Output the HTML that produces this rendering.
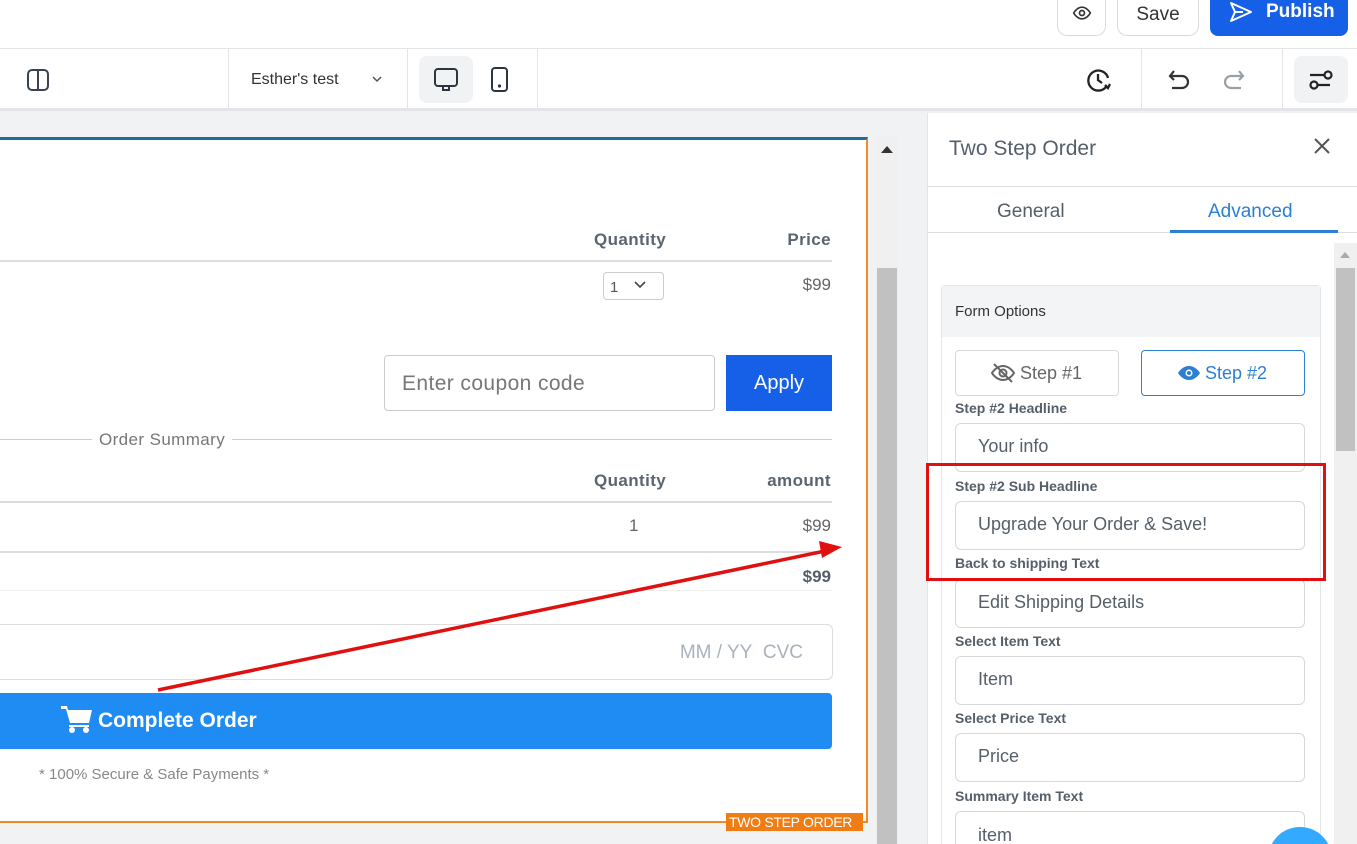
<!DOCTYPE html>
<html><head><meta charset="utf-8"><style>
*{box-sizing:border-box;margin:0;padding:0}
html{width:1357px;height:844px;overflow:hidden}
body{width:1357px;height:844px;overflow:hidden;position:relative;font-family:"Liberation Sans",sans-serif;background:#f1f2f4;color:#333}
#wrap{position:absolute;left:0;top:0;width:1357px;height:844px;overflow:hidden}
.a{position:absolute}
.lbl{position:absolute;left:955px;font-size:14px;font-weight:bold;color:#555f6a}
.inp{position:absolute;left:955px;width:350px;height:49px;border:1px solid #d6d8db;border-radius:6px;font-size:18px;color:#555f6a;padding:12px 22px;background:#fff}
.th{position:absolute;font-size:17px;font-weight:bold;color:#5a6570;letter-spacing:0.4px}
.hl{position:absolute;left:0;width:832px;height:2px;background:#ddd}
</style></head><body><div id="wrap">
<div class="a" style="left:0;top:0;width:1357px;height:49px;background:#fff;border-bottom:1px solid #e3e5e8"></div>
<div class="a" style="left:1057px;top:0;width:49px;height:36px;border:1px solid #d9dbde;border-top:none;border-radius:0 0 10px 10px;background:#fff"></div>
<svg class="a" style="left:1071px;top:3px" width="22" height="20" viewBox="0 0 24 24" fill="none" stroke="#333" stroke-width="2"><path d="M2 12s4-7 10-7 10 7 10 7-4 7-10 7S2 12 2 12z"/><circle cx="12" cy="12" r="3"/></svg>
<div class="a" style="left:1117px;top:0;width:82px;height:36px;border:1px solid #d9dbde;border-top:none;border-radius:0 0 10px 10px;background:#fff;font-size:19px;color:#333;text-align:center;padding-top:4px">Save</div>
<div class="a" style="left:1210px;top:0;width:138px;height:36px;border-radius:0 0 8px 8px;background:#1660e8;color:#fff;font-size:19px;font-weight:bold;padding:1px 0 0 56px">Publish</div>
<svg class="a" style="left:1228px;top:0px" width="26" height="24" viewBox="0 0 26 24" fill="none" stroke="#fff" stroke-width="2" stroke-linejoin="round"><path d="M3 3l20 9-20 9 4-9z M7 12h8"/></svg>
<div class="a" style="left:0;top:49px;width:1357px;height:62px;background:#fff;border-bottom:3px solid #e3e5e8"></div>
<div class="a" style="left:228px;top:49px;width:1px;height:60px;background:#e3e5e8"></div>
<div class="a" style="left:407px;top:49px;width:1px;height:60px;background:#e3e5e8"></div>
<div class="a" style="left:537px;top:49px;width:1px;height:60px;background:#e3e5e8"></div>
<div class="a" style="left:1141px;top:49px;width:1px;height:60px;background:#e3e5e8"></div>
<div class="a" style="left:1282px;top:49px;width:1px;height:60px;background:#e3e5e8"></div>
<svg class="a" style="left:26px;top:68px" width="24" height="24" viewBox="0 0 24 24" fill="none" stroke="#3a4350" stroke-width="2"><rect x="2" y="2" width="20" height="20" rx="4"/><path d="M12 2v20"/></svg>
<div class="a" style="left:251px;top:71px;font-size:16px;color:#333">Esther's test</div>
<svg class="a" style="left:370px;top:74px" width="14" height="10" viewBox="0 0 14 10" fill="none" stroke="#555" stroke-width="1.5"><path d="M3 3l4 4 4-4"/></svg>
<div class="a" style="left:419px;top:56px;width:54px;height:47px;border-radius:8px;background:#f1f2f4"></div>
<svg class="a" style="left:433px;top:67px" width="26" height="26" viewBox="0 0 26 26" fill="none" stroke="#2d3540" stroke-width="2"><rect x="2" y="2" width="22" height="17" rx="3"/><rect x="10" y="19" width="6" height="4"/></svg>
<svg class="a" style="left:488px;top:67px" width="24" height="26" viewBox="0 0 24 26" fill="none" stroke="#2d3540" stroke-width="2"><rect x="4" y="1" width="15" height="23" rx="3"/><circle cx="11.5" cy="19" r="0.6" fill="#2d3540"/></svg>
<svg class="a" style="left:1085px;top:66px" width="28" height="28" viewBox="0 0 28 28" fill="none" stroke="#222" stroke-width="2.3"><path d="M23 12A10 10 0 1 0 21 21"/><path d="M13 8v6l4 3"/><path d="M20 19l3 3 2-4"/></svg>
<svg class="a" style="left:1166px;top:67px" width="26" height="26" viewBox="0 0 26 26" fill="none" stroke="#333" stroke-width="2.2"><path d="M8 4L4 9l4 4"/><path d="M4 9h12a6 6 0 0 1 0 12H6"/></svg>
<svg class="a" style="left:1221px;top:67px" width="26" height="26" viewBox="0 0 26 26" fill="none" stroke="#9aa0a6" stroke-width="2.2"><path d="M18 4l4 5-4 4"/><path d="M22 9H10a6 6 0 0 0 0 12h10"/></svg>
<div class="a" style="left:1294px;top:56px;width:54px;height:47px;border-radius:8px;background:#f1f2f4"></div>
<svg class="a" style="left:1308px;top:68px" width="26" height="24" viewBox="0 0 26 24" fill="none" stroke="#222" stroke-width="2.2"><path d="M2 7h14M22 17H10"/><circle cx="20" cy="7" r="3.5"/><circle cx="6" cy="17" r="3.5"/></svg>
<div class="a" style="left:0;top:137px;width:868px;height:686px;background:#fff;border-right:2px solid #f08a24;border-bottom:2px solid #f08a24;border-top:3px solid #1f6a9e"></div>
<div class="a" style="left:726px;top:813px;width:137px;height:18px;background:#f07d14;color:#fff;font-size:14px;padding:1px 3px;letter-spacing:-0.3px">TWO STEP ORDER</div>
<div class="a" style="left:876px;top:137px;width:22px;height:707px;background:#f0f0f0"></div>
<div class="a" style="left:877px;top:268px;width:20px;height:576px;background:#c1c1c1"></div>
<div class="a" style="left:881px;top:146px;width:0;height:0;border-left:6px solid transparent;border-right:6px solid transparent;border-bottom:7px solid #333"></div>
<div class="th" style="left:594px;top:230px">Quantity</div>
<div class="th" style="right:526px;top:230px">Price</div>
<div class="hl" style="top:260px"></div>
<div class="a" style="left:603px;top:272px;width:61px;height:28px;border:1px solid #ccc;border-radius:4px;font-size:15px;color:#555;padding:6px 6px">1</div>
<svg class="a" style="left:633px;top:280px" width="14" height="10" viewBox="0 0 14 10" fill="none" stroke="#444" stroke-width="1.6"><path d="M2 2l5 5 5-5"/></svg>
<div class="a" style="right:526px;top:275px;font-size:17px;color:#666">$99</div>
<div class="a" style="left:384px;top:355px;width:331px;height:56px;border:1px solid #ccc;border-radius:4px;font-size:21px;color:#777;padding:16px 17px;letter-spacing:0.4px">Enter coupon code</div>
<div class="a" style="left:726px;top:355px;width:106px;height:56px;background:#1660e8;color:#fff;font-size:20px;text-align:center;padding-top:17px">Apply</div>
<div class="a" style="left:0;top:439px;width:832px;height:1px;background:#ccc"></div>
<div class="a" style="left:92px;top:430px;background:#fff;padding:0 7px;font-size:17px;color:#777;letter-spacing:0.4px">Order Summary</div>
<div class="th" style="left:594px;top:471px">Quantity</div>
<div class="th" style="right:526px;top:471px">amount</div>
<div class="hl" style="top:501px"></div>
<div class="a" style="left:629px;top:516px;font-size:17px;color:#666">1</div>
<div class="a" style="right:526px;top:516px;font-size:17px;color:#666">$99</div>
<div class="hl" style="top:551px"></div>
<div class="a" style="right:526px;top:567px;font-size:17px;font-weight:bold;color:#555f6a">$99</div>
<div class="a" style="left:0;top:590px;width:832px;height:1px;background:#eee"></div>
<div class="a" style="left:-5px;top:624px;width:838px;height:56px;border:1px solid #ddd;border-radius:6px"></div>
<div class="a" style="right:554px;top:642px;font-size:19px;color:#aab2bd">MM / YY&nbsp; CVC</div>
<div class="a" style="left:0;top:693px;width:832px;height:56px;background:#1e8cf2;border-radius:0 4px 4px 0"></div>
<svg class="a" style="left:61px;top:705px" width="32" height="28" viewBox="0 0 32 28" fill="#fff"><path d="M0 1h6l1 4h24l-3 13H9L5 4H0z"/><rect x="8" y="20" width="20" height="2"/><circle cx="11" cy="25" r="3"/><circle cx="25" cy="25" r="3"/></svg>
<div class="a" style="left:98px;top:709px;font-size:21px;font-weight:bold;color:#fff">Complete Order</div>
<div class="a" style="left:39px;top:766px;font-size:15px;color:#888">* 100% Secure &amp; Safe Payments *</div>
<svg class="a" style="left:0;top:0" width="900" height="844"><line x1="158" y1="690" x2="825" y2="551" stroke="#e01010" stroke-width="3.5"/><path d="M842 547l-23 -6 3 17z" fill="#e01010"/></svg>
<div class="a" style="left:927px;top:113px;width:430px;height:731px;background:#fff;border-left:1px solid #e5e5e5"></div>
<div class="a" style="left:949px;top:137px;font-size:21px;color:#555f6a">Two Step Order</div>
<svg class="a" style="left:1313px;top:137px" width="18" height="18" viewBox="0 0 18 18" stroke="#555" stroke-width="2"><path d="M2 2l14 14M16 2L2 16"/></svg>
<div class="a" style="left:927px;top:186px;width:430px;height:1px;background:#ddd"></div>
<div class="a" style="left:997px;top:201px;font-size:19px;color:#555f6a">General</div>
<div class="a" style="left:1208px;top:201px;font-size:19px;color:#2b7fd4">Advanced</div>
<div class="a" style="left:927px;top:232px;width:430px;height:1px;background:#ddd"></div>
<div class="a" style="left:1170px;top:230px;width:168px;height:3px;background:#2b7fd4"></div>
<div class="a" style="left:1334px;top:243px;width:23px;height:601px;background:#f0f0f0"></div>
<div class="a" style="left:1336px;top:268px;width:19px;height:183px;background:#c1c1c1"></div>
<div class="a" style="left:1340px;top:252px;width:0;height:0;border-left:5px solid transparent;border-right:5px solid transparent;border-bottom:6px solid #aaa"></div>
<div class="a" style="left:941px;top:285px;width:380px;height:559px;border:1px solid #e3e5e8;border-bottom:none;border-radius:4px 4px 0 0"></div>
<div class="a" style="left:942px;top:286px;width:378px;height:51px;background:#f3f4f6"></div>
<div class="a" style="left:955px;top:303px;font-size:15px;color:#333">Form Options</div>
<div class="a" style="left:955px;top:350px;width:164px;height:46px;border:1px solid #d6d8db;border-radius:4px;font-size:18px;color:#666;padding:12px 0 0 64px">Step #1</div>
<svg class="a" style="left:990px;top:362px" width="26" height="22" viewBox="0 0 26 22" fill="none" stroke="#666" stroke-width="2"><path d="M2 11s4-7 11-7 11 7 11 7-4 7-11 7S2 11 2 11z"/><circle cx="13" cy="11" r="3.5"/><path d="M4 2l18 18"/></svg>
<div class="a" style="left:1141px;top:350px;width:164px;height:46px;border:1px solid #2b7fd4;border-radius:4px;font-size:18px;color:#2b7fd4;padding:12px 0 0 63px">Step #2</div>
<svg class="a" style="left:1177px;top:363px" width="24" height="20" viewBox="0 0 24 20" fill="#2b7fd4"><path d="M1 10s4-7 11-7 11 7 11 7-4 7-11 7S1 10 1 10z"/><circle cx="12" cy="10" r="3.5" fill="#fff"/><circle cx="12" cy="10" r="2"/></svg>
<div class="lbl" style="top:400px">Step #2 Headline</div>
<div class="inp" style="top:423px">Your info</div>
<div class="lbl" style="top:478px">Step #2 Sub Headline</div>
<div class="inp" style="top:501px">Upgrade Your Order &amp; Save!</div>
<div class="lbl" style="top:555px">Back to shipping Text</div>
<div class="inp" style="top:579px">Edit Shipping Details</div>
<div class="lbl" style="top:633px">Select Item Text</div>
<div class="inp" style="top:656px">Item</div>
<div class="lbl" style="top:710px">Select Price Text</div>
<div class="inp" style="top:733px">Price</div>
<div class="lbl" style="top:788px">Summary Item Text</div>
<div class="inp" style="top:811px;height:33px;border-bottom:none;border-radius:6px 6px 0 0;padding-top:13px;line-height:20px">item</div>
<div class="a" style="left:926px;top:463px;width:400px;height:118px;border:3px solid #e01010"></div>
<div class="a" style="left:1268px;top:827px;width:64px;height:17px;overflow:hidden"><div style="width:64px;height:64px;border-radius:50%;background:#33aaff"></div></div>
</div></body></html>
